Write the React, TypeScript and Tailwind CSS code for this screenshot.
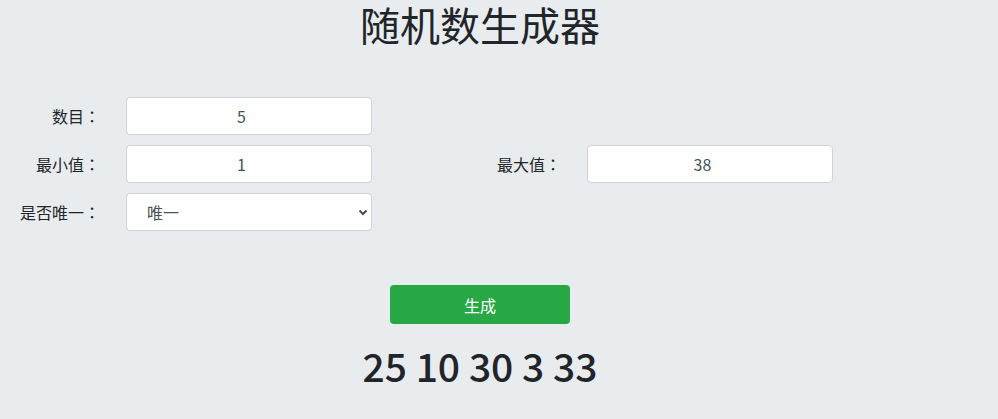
import { useState } from "react";

const FONT = { fontFamily: '"Noto Sans CJK SC", "Noto Sans", sans-serif' };

function pick(count: number, min: number, max: number, unique: boolean): number[] {
  const out: number[] = [];
  const span = max - min + 1;
  if (unique && count > span) return out;
  while (out.length < count) {
    const n = min + Math.floor(Math.random() * span);
    if (unique && out.includes(n)) continue;
    out.push(n);
  }
  return out;
}

function Label({ text, className = "" }: { text: string; className?: string }) {
  return (
    <label className={`w-[100px] text-right text-base ${className}`}>
      {text}
      <span className="font-['Noto_Sans_CJK_JP',sans-serif]">：</span>
    </label>
  );
}

export default function App() {
  const [count, setCount] = useState("5");
  const [min, setMin] = useState("1");
  const [max, setMax] = useState("38");
  const [unique, setUnique] = useState("1");
  const [result, setResult] = useState<number[]>([25, 10, 30, 3, 33]);

  const inputCls =
    "h-[38px] w-[246px] rounded-[4px] border border-[#ced4da] bg-white px-3 text-center text-base text-[#495057] outline-none focus:border-[#80bdff]";

  return (
    <div className="min-h-screen w-full bg-[#e9ecef] text-[#212529]" style={FONT}>
      <div className="w-[960px]">
        <h1 className="text-center text-[40px] font-normal leading-[48px]">随机数生成器</h1>

        <div className="mt-[49px] flex flex-col gap-[10px]">
          <div className="flex h-[38px] items-center">
            <Label text="数目" />
            <input
              type="number"
              value={count}
              onChange={(e) => setCount(e.target.value)}
              className={`ml-[26px] ${inputCls}`}
            />
          </div>

          <div className="flex h-[38px] items-center">
            <Label text="最小值" />
            <input
              type="number"
              value={min}
              onChange={(e) => setMin(e.target.value)}
              className={`ml-[26px] ${inputCls}`}
            />
            <Label text="最大值" className="ml-[89px]" />
            <input
              type="number"
              value={max}
              onChange={(e) => setMax(e.target.value)}
              className={`ml-[26px] ${inputCls}`}
            />
          </div>

          <div className="flex h-[38px] items-center">
            <Label text="是否唯一" />
            <div className="relative ml-[26px] w-[246px]">
              <select
                value={unique}
                onChange={(e) => setUnique(e.target.value)}
                className="h-[38px] w-full appearance-none rounded-[4px] border border-[#ced4da] bg-white pl-[20px] pr-8 text-base text-[#495057] outline-none"
              >
                <option value="1">唯一</option>
                <option value="0">不唯一</option>
              </select>
              <svg
                className="pointer-events-none absolute right-[4px] top-1/2 -translate-y-1/2"
                width="10"
                height="8"
                viewBox="0 0 10 8"
              >
                <path d="M1.5 2.5 L5 6 L8.5 2.5" fill="none" stroke="#495057" strokeWidth="2" />
              </svg>
            </div>
          </div>
        </div>

        <div className="mt-[54px] flex justify-center">
          <button
            type="button"
            onClick={() =>
              setResult(pick(Number(count), Number(min), Number(max), unique === "1"))
            }
            className="h-[39px] w-[180px] rounded-[4px] bg-[#28a745] text-base text-white hover:bg-[#218838]"
          >
            生成
          </button>
        </div>

        <h1 className="mt-[17px] text-center text-[39px] font-medium leading-[48px]">
          {result.join(" ")}
        </h1>
      </div>
    </div>
  );
}
